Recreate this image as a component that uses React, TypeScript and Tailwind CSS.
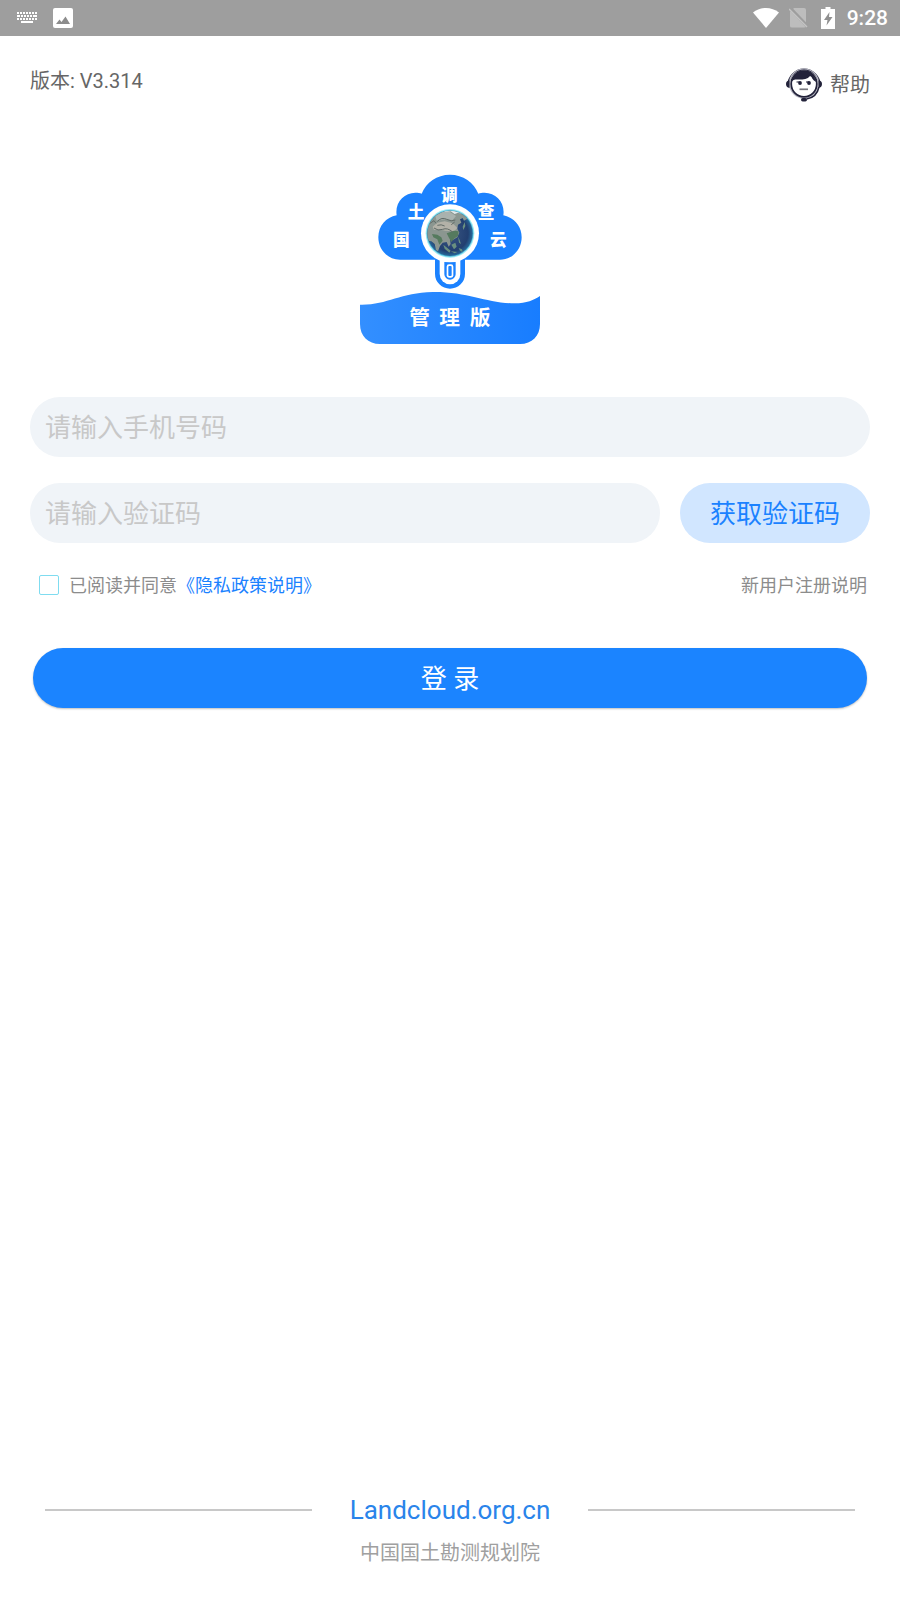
import React, { useState } from 'react';

const StatusBar: React.FC = () => (
  <div className="flex h-9 items-center justify-between bg-[#9e9e9e] px-3 text-white">
    <div className="flex items-center gap-4 pl-1">
      <svg className="h-3 w-[21px]" viewBox="0 0 21 12" fill="currentColor" aria-hidden="true">
        <path d="M1 0h2v2H1zM4 0h2v2H4zM7 0h2v2H7zM10 0h2v2h-2zM13 0h2v2h-2zM16 0h2v2h-2zM19 0h2v2h-2zM1 3h3v2H1zM5 3h2v2H5zM8 3h2v2H8zM11 3h2v2h-2zM14 3h2v2h-2zM17 3h4v2h-4zM1 6h2v2H1zM4 6h2v2H4zM7 6h2v2H7zM10 6h2v2h-2zM13 6h2v2h-2zM16 6h2v2h-2zM19 6h2v2h-2zM5 9h12v2H5z" />
      </svg>
      <svg className="h-5 w-5" viewBox="0 0 20 20" aria-hidden="true">
        <rect width="20" height="20" rx="2" fill="#fff" />
        <path d="M3 16l3.500-4.500 2 2.500 4-5.500L17 16z" fill="#8c8c8c" />
      </svg>
    </div>
    <div className="flex items-center gap-2.5">
      <svg className="h-5 w-[26px]" viewBox="0 0 26 20" fill="currentColor" aria-hidden="true">
        <path d="M0 4.500C7.500-1.500 18.500-1.500 26 4.500L13 20z" />
      </svg>
      <svg className="h-5 w-[22px]" viewBox="0 0 22 20" aria-hidden="true">
        <path d="M5 0h10q2 0 2 2v16q0 1.500-2 1.500H3q-2 0-2-1.500V4z" fill="#bdbdbd" />
        <path d="M1 0l18 19" stroke="#9e9e9e" strokeWidth="3.500" />
        <path d="M0 1l18 18" stroke="#c4c4c4" strokeWidth="1.500" />
      </svg>
      <svg className="h-[22px] w-4" viewBox="0 0 16 22" aria-hidden="true">
        <path d="M4.500 0h5v2H14v20H0V2h4.500z" fill="#fff" />
        <path d="M8.500 5L3 13h3.500L5.500 18.500 11.500 10H8z" fill="#8f8f8f" />
      </svg>
      <span className="font-[Roboto,sans-serif] text-[21px] leading-6 font-medium">9:28</span>
    </div>
  </div>
);

const HelpIcon: React.FC = () => (
  <svg className="h-9 w-9" viewBox="0 0 36 36" aria-hidden="true">
    <circle cx="18" cy="17.500" r="15" fill="#fff" />
    <path d="M2 20a16 16.500 0 1 1 32 0" fill="none" stroke="#22223a" strokeWidth="2" />
    <circle cx="18" cy="17.500" r="14.500" fill="none" stroke="#b9b9c4" strokeWidth="1.200" />
    <circle cx="18" cy="18" r="12.800" fill="#fff" stroke="#22223a" strokeWidth="1.800" />
    <path d="M5.500 16C7 9 11.500 5 18 5c4.500 0 8 2 10 5.500-1.500.500-2.500.500-4-.500-3 4-9 3.500-13 3.500-2.500 0-4.500.500-5.500 2.500z" fill="#22223a" />
    <path d="M24 7.500l4 3 2.500 5.500c-2-.500-4-2.500-5-5z" fill="#22223a" />
    <path d="M3.500 14.500Q0 14.500 0 18t3.500 4zM32.500 14.500Q36 14.500 36 18t-3.500 4z" fill="#22223a" />
    <path d="M33 21c-1.500 7-6 11-12.500 12" fill="none" stroke="#22223a" strokeWidth="1.500" />
    <rect x="15" y="32" width="6" height="3.500" rx="1.700" fill="#22223a" />
    <circle cx="14" cy="17" r="1.900" fill="#22223a" />
    <circle cx="23" cy="17" r="1.900" fill="#22223a" />
    <path d="M10.500 16h3M20 16h3" stroke="#22223a" strokeWidth="1" />
    <path d="M13.500 23.300h8.500" stroke="#77777f" strokeWidth="1.700" />
  </svg>
);

const Logo: React.FC = () => (
  <svg
    className="mx-auto h-[170px] w-[180px]"
    viewBox="30 28 540 510"
    fill="#fff"
    fontFamily='"Noto Sans CJK SC", sans-serif'
    fontWeight="900"
    textAnchor="middle"
    role="img"
    aria-label="国土调查云 管理版"
  >
    <defs>
      <linearGradient id="banner" x1="0" y1="0" x2="1" y2="0">
        <stop offset="0" stopColor="#338fff" />
        <stop offset="1" stopColor="#187dff" />
      </linearGradient>
      <radialGradient id="globe" cx="0.500" cy="0.500" r="0.500">
        <stop offset="0" stopColor="#3a5682" />
        <stop offset="0.800" stopColor="#223f70" />
        <stop offset="1" stopColor="#28699a" />
      </radialGradient>
      <clipPath id="globeClip">
        <circle cx="300" cy="206" r="68" />
      </clipPath>
    </defs>

    {/* Cloud */}
    <path
      d="M150 285C112 285 85 254 85 218c0-34 23-60 55-66-6-38 22-68 56-68 8 0 14 1 19 3 13-34 46-57 85-57s72 23 85 57c5-2 11-3 19-3 34 0 62 30 56 68 32 6 55 32 55 66 0 36-27 67-65 67H345v42a45 45 0 0 1-90 0v-42z"
      fill="#1b82ff"
    />
    <path d="M269 280v48a31 31 0 0 0 62 0v-48z" />
    <path d="M283 290h34v38a17 17 0 0 1-34 0z" fill="#1b82ff" />
    <rect x="290" y="299" width="20" height="40" rx="7" />
    <rect x="295" y="304" width="10" height="30" rx="3" fill="#1b82ff" />

    {/* Globe */}
    <circle cx="300" cy="206" r="87" />
    <circle cx="300" cy="206" r="73" fill="#9deaf5" />
    <circle cx="300" cy="206" r="70" fill="#4bb8d6" />
    <circle cx="300" cy="206" r="68" fill="url(#globe)" />
    <g clipPath="url(#globeClip)">
      <path d="M232 190l6-22 14-20 22-14 28-6 26 6 16 14 8 14-10 6-4-8-8 4 4 10-10 6-2 12 6 12-6 14-14 8-8-2 2 14-6 8-6-14-12 2-8 10-6 16-6-4-4-18-10-8-12-2-4-8z" fill="#8b9690" />
      <path d="M248 186l14-12 22-4 24 6 14 14-10 10-26-2-20-4-14 2z" fill="#b3b2a8" />
      <path d="M256 154l20-12 24 0 18 12-10 12-26-2-22 4z" fill="#a9b2ae" />
      <path d="M246 208l16 2 12 8 4 10-10 12-6-16-12-6zM290 206l22-8 14 2-2 14-12 8-8 10-8-14z" fill="#557a5e" />
      <path d="M276 134l24-8 26 8 12 14-14-4-10 4-12-8-18 2z" fill="#e3ebed" />
      <path d="M240 176l12-8 6 8M262 170q14-14 28-6t26 2M252 190q12 10 26 4t30 8M304 180l10-8M262 182q12-4 22 2" fill="none" stroke="#616b67" strokeWidth="3" />
      <path d="M280 240l12 10 10 8-4 6-14-12zM304 240l12-6 4 12-8 8zM324 216l5 10 4 12-6-4zM338 186l6-14 2 12-6 12zM302 260l20 2-8 4zM326 250l10 4 2 8-8-4z" fill="#6a9080" />
    </g>

    <g fontSize="50">
      <text x="154" y="244">国</text>
      <text x="198" y="159">土</text>
      <text x="298" y="109">调</text>
      <text x="408" y="160">查</text>
      <text x="445" y="244">云</text>
    </g>

    {/* Banner */}
    <path
      d="M30 420C110 422 150 384 248 382c110-1 160 34 246 34 36 0 58-10 76-22v84c0 36-24 60-60 60H90c-36 0-60-24-60-60z"
      fill="url(#banner)"
    />
    <g fontSize="62" fontWeight="700">
      <text x="209" y="482">管</text>
      <text x="299" y="482">理</text>
      <text x="390" y="482">版</text>
    </g>
  </svg>
);

const App: React.FC = () => {
  const [phone, setPhone] = useState('');
  const [code, setCode] = useState('');
  const [agreed, setAgreed] = useState(false);

  return (
    <div className="flex min-h-screen flex-col bg-white font-[Roboto,'Noto_Sans_CJK_SC',sans-serif] text-[#666]">
      <StatusBar />

      <header className="flex items-start justify-between px-[30px] pt-[30px] text-xl leading-[30px]">
        <span>版本: V3.314</span>
        <button type="button" className="flex items-center gap-2">
          <HelpIcon />
          <span className="pt-0.5">帮助</span>
        </button>
      </header>

      <main className="px-[30px] pt-[72px]">
        <Logo />

        <form onSubmit={(e) => e.preventDefault()} className="mt-[53px]">
          <input
            type="tel"
            aria-label="手机号码"
            placeholder="请输入手机号码"
            value={phone}
            onChange={(e) => setPhone(e.target.value)}
            className="block h-[60px] w-full rounded-full bg-[#f0f4f8] px-[15px] pt-0.5 text-[26px] outline-none placeholder:text-[#c8c8c8]"
          />
          <div className="mt-[26px] flex gap-5">
            <input
              type="text"
              aria-label="验证码"
              placeholder="请输入验证码"
              value={code}
              onChange={(e) => setCode(e.target.value)}
              className="h-[60px] min-w-0 flex-1 rounded-full bg-[#f0f4f8] px-[15px] pt-0.5 text-[26px] outline-none placeholder:text-[#c8c8c8]"
            />
            <button type="button" className="h-[60px] rounded-full bg-[#d1e6ff] px-[30px] pt-0.5 text-[26px] text-[#1b82ff]">
              获取验证码
            </button>
          </div>

          <div className="mt-[26px] flex items-center justify-between pr-[3px] pl-[9px] text-lg leading-[30px] text-[#8c8c8c]">
            <div className="flex items-center">
              <input
                id="agree"
                type="checkbox"
                checked={agreed}
                onChange={(e) => setAgreed(e.target.checked)}
                className="mr-[10px] h-5 w-5 appearance-none rounded-xs border border-[#7fdcf0] checked:bg-[#1b82ff]"
              />
              <label htmlFor="agree" className="pt-0.5">已阅读并同意</label>
              <a href="#privacy" className="pt-0.5 text-[#1b82ff]">《隐私政策说明》</a>
            </div>
            <a href="#register" className="pt-0.5">新用户注册说明</a>
          </div>

          <div className="mt-[47px] px-[3px]">
            <button type="submit" className="h-[60px] w-full rounded-full bg-[#1b84ff] pt-0.5 text-[26px] text-white shadow-[0_1px_2px_rgba(0,0,0,0.25)]">
              登 录
            </button>
          </div>
        </form>
      </main>

      <footer className="mt-auto px-[45px] pb-8 text-center">
        <div className="flex items-center gap-[38px]">
          <span className="h-0.5 flex-1 bg-[#c8c8c8]" />
          <a href="#landcloud" className="text-[26px] leading-9 text-[#2a84ea]">Landcloud.org.cn</a>
          <span className="h-0.5 flex-1 bg-[#c8c8c8]" />
        </div>
        <p className="mt-[10px] text-xl leading-[30px] text-[#a0a0a0]">中国国土勘测规划院</p>
      </footer>
    </div>
  );
};

export default App;
